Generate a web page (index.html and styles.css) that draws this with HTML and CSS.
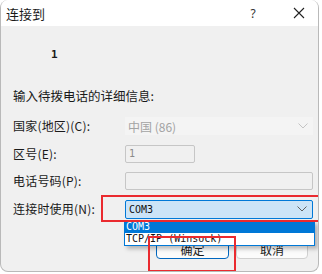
FILE: index.html
```html
<!DOCTYPE html>
<html lang="zh-CN">
<head>
    <meta charset="UTF-8">
    <title>连接到</title>
    <link rel="stylesheet" href="styles.css">
</head>
<body>

    <div class="dialog">
        <div class="title-bar">
            <span class="title">连接到</span>
            <span class="title-btn help">?</span>
            <span class="title-btn close">
                <svg width="12" height="12" viewBox="0 0 12 12"><path d="M1 1L11 11M11 1L1 11" stroke="#222" stroke-width="1.1" fill="none"/></svg>
            </span>
        </div>

        <div class="dialog-body">
            <div class="conn-name">1</div>
            <div class="intro">输入待拨电话的详细信息:</div>

            <div class="form">
                <label class="row-label">国家(地区)(C):</label>
                <div class="select disabled">
                    <span>中国 (86)</span>
                    <svg class="chevron" width="10" height="6" viewBox="0 0 10 6"><path d="M0.5 0.5L5 5L9.5 0.5" stroke="#c4c4c4" fill="none"/></svg>
                </div>

                <label class="row-label">区号(E):</label>
                <div class="input short">1</div>

                <label class="row-label">电话号码(P):</label>
                <div class="input"></div>

                <label class="row-label">连接时使用(N):</label>
                <div class="select active">
                    <span class="mono">COM3</span>
                    <svg class="chevron" width="10" height="6" viewBox="0 0 10 6"><path d="M0.5 0.5L5 5L9.5 0.5" stroke="#606060" fill="none"/></svg>
                </div>
            </div>

            <div class="buttons">
                <button class="btn default">确定</button>
                <button class="btn">取消</button>
            </div>
        </div>

        <!-- 展开的下拉列表 -->
        <div class="dropdown-list">
            <div class="option selected">COM3</div>
            <div class="option">TCP/IP (Winsock)</div>
        </div>

        <!-- 红框标注 -->
        <div class="mark mark-select"></div>
        <div class="mark mark-ok"></div>
    </div>

</body>
</html>
```

FILE: styles.css
```css
body {
    margin: 0;
    background-color: #ffffff;
    font-family: "Noto Sans CJK SC", "Noto Sans", sans-serif;
    font-size: 12px;
    color: #1a1a1a;
}
.dialog {
    position: relative;
    width: 319px;
    height: 272px;
    border: 1px solid #b9b9b9;
    border-top: none;
    border-radius: 8px;
    background-color: #f0f0f0;
    overflow: hidden;
    box-sizing: border-box;
}
.title-bar {
    height: 26px;
    background-color: #ffffff;
    display: flex;
    align-items: center;
    padding-left: 5px;
}
.title {
    font-size: 13px;
    flex: 1;
}
.title-btn {
    display: flex;
    align-items: center;
    justify-content: center;
    height: 26px;
}
.help {
    font-family: "Segoe UI", "Noto Sans", sans-serif;
    font-size: 12px;
    width: 20px;
    color: #333;
}
.close {
    width: 38px;
    margin-left: 17px;
}
.conn-name {
    height: 58px;
    line-height: 58px;
    padding-left: 50px;
    font-family: "DejaVu Sans Mono", monospace;
    font-size: 11px;
    font-weight: bold;
}
.intro {
    height: 24px;
    line-height: 24px;
    padding-left: 12px;
    font-size: 12.5px;
}
.form {
    display: grid;
    grid-template-columns: 112px 1fr;
    grid-auto-rows: 18px;
    row-gap: 9.7px;
    align-items: center;
    padding: 9px 6px 0 12px;
}
.row-label {
    font-size: 12px;
    line-height: 18px;
    letter-spacing: 0.2px;
}
.select {
    height: 18px;
    box-sizing: border-box;
    display: flex;
    align-items: center;
    justify-content: space-between;
    padding: 0 5px 0 3px;
}
.select.disabled {
    background-color: #f4f4f4;
    color: #a3a3a3;
    width: 188px;
}
.select.active {
    height: 19px;
    background-color: #cce4f7;
    border: 1px solid #0078d7;
    border-radius: 2px;
    padding-left: 3px;
}
.mono {
    font-family: "DejaVu Sans Mono", monospace;
    font-size: 10px;
    color: #111;
}
.input {
    height: 18px;
    box-sizing: border-box;
    border: 1px solid #c6c6c6;
    border-radius: 2px;
    padding-left: 3px;
    font-family: "DejaVu Sans Mono", monospace;
    font-size: 10px;
    line-height: 16px;
    color: #8a8a8a;
}
.input.short {
    width: 70px;
}
.buttons {
    display: flex;
    justify-content: flex-end;
    gap: 7px;
    padding: 17px 10px 0 0;
}
.btn {
    width: 72px;
    height: 24px;
    border: 1px solid #d0d0d0;
    border-radius: 4px;
    background-color: #fbfbfb;
    font-family: "Noto Sans CJK SC", sans-serif;
    font-size: 12px;
    line-height: 28px;
    color: #1a1a1a;
    padding: 0;
}
.btn.default {
    border: 1px solid #0067c0;
    width: 73px;
}
.dropdown-list {
    position: absolute;
    left: 123px;
    top: 221px;
    width: 189px;
    border: 1px solid #0078d7;
    border-top: none;
    background-color: #ffffff;
    box-shadow: 3px 3px 4px rgba(0, 0, 0, 0.25);
    font-family: "DejaVu Sans Mono", monospace;
    font-size: 10px;
}
.option {
    height: 12px;
    line-height: 12px;
    padding-left: 1px;
    color: #111;
}
.option.selected {
    background-color: #0078d7;
    color: #ffffff;
}
.mark {
    position: absolute;
    border: 2px solid #ea2a2f;
    box-sizing: border-box;
}
.mark-select {
    left: 100px;
    top: 195px;
    width: 221px;
    height: 27px;
}
.mark-ok {
    left: 147px;
    top: 236px;
    width: 88px;
    height: 36px;
}
```
